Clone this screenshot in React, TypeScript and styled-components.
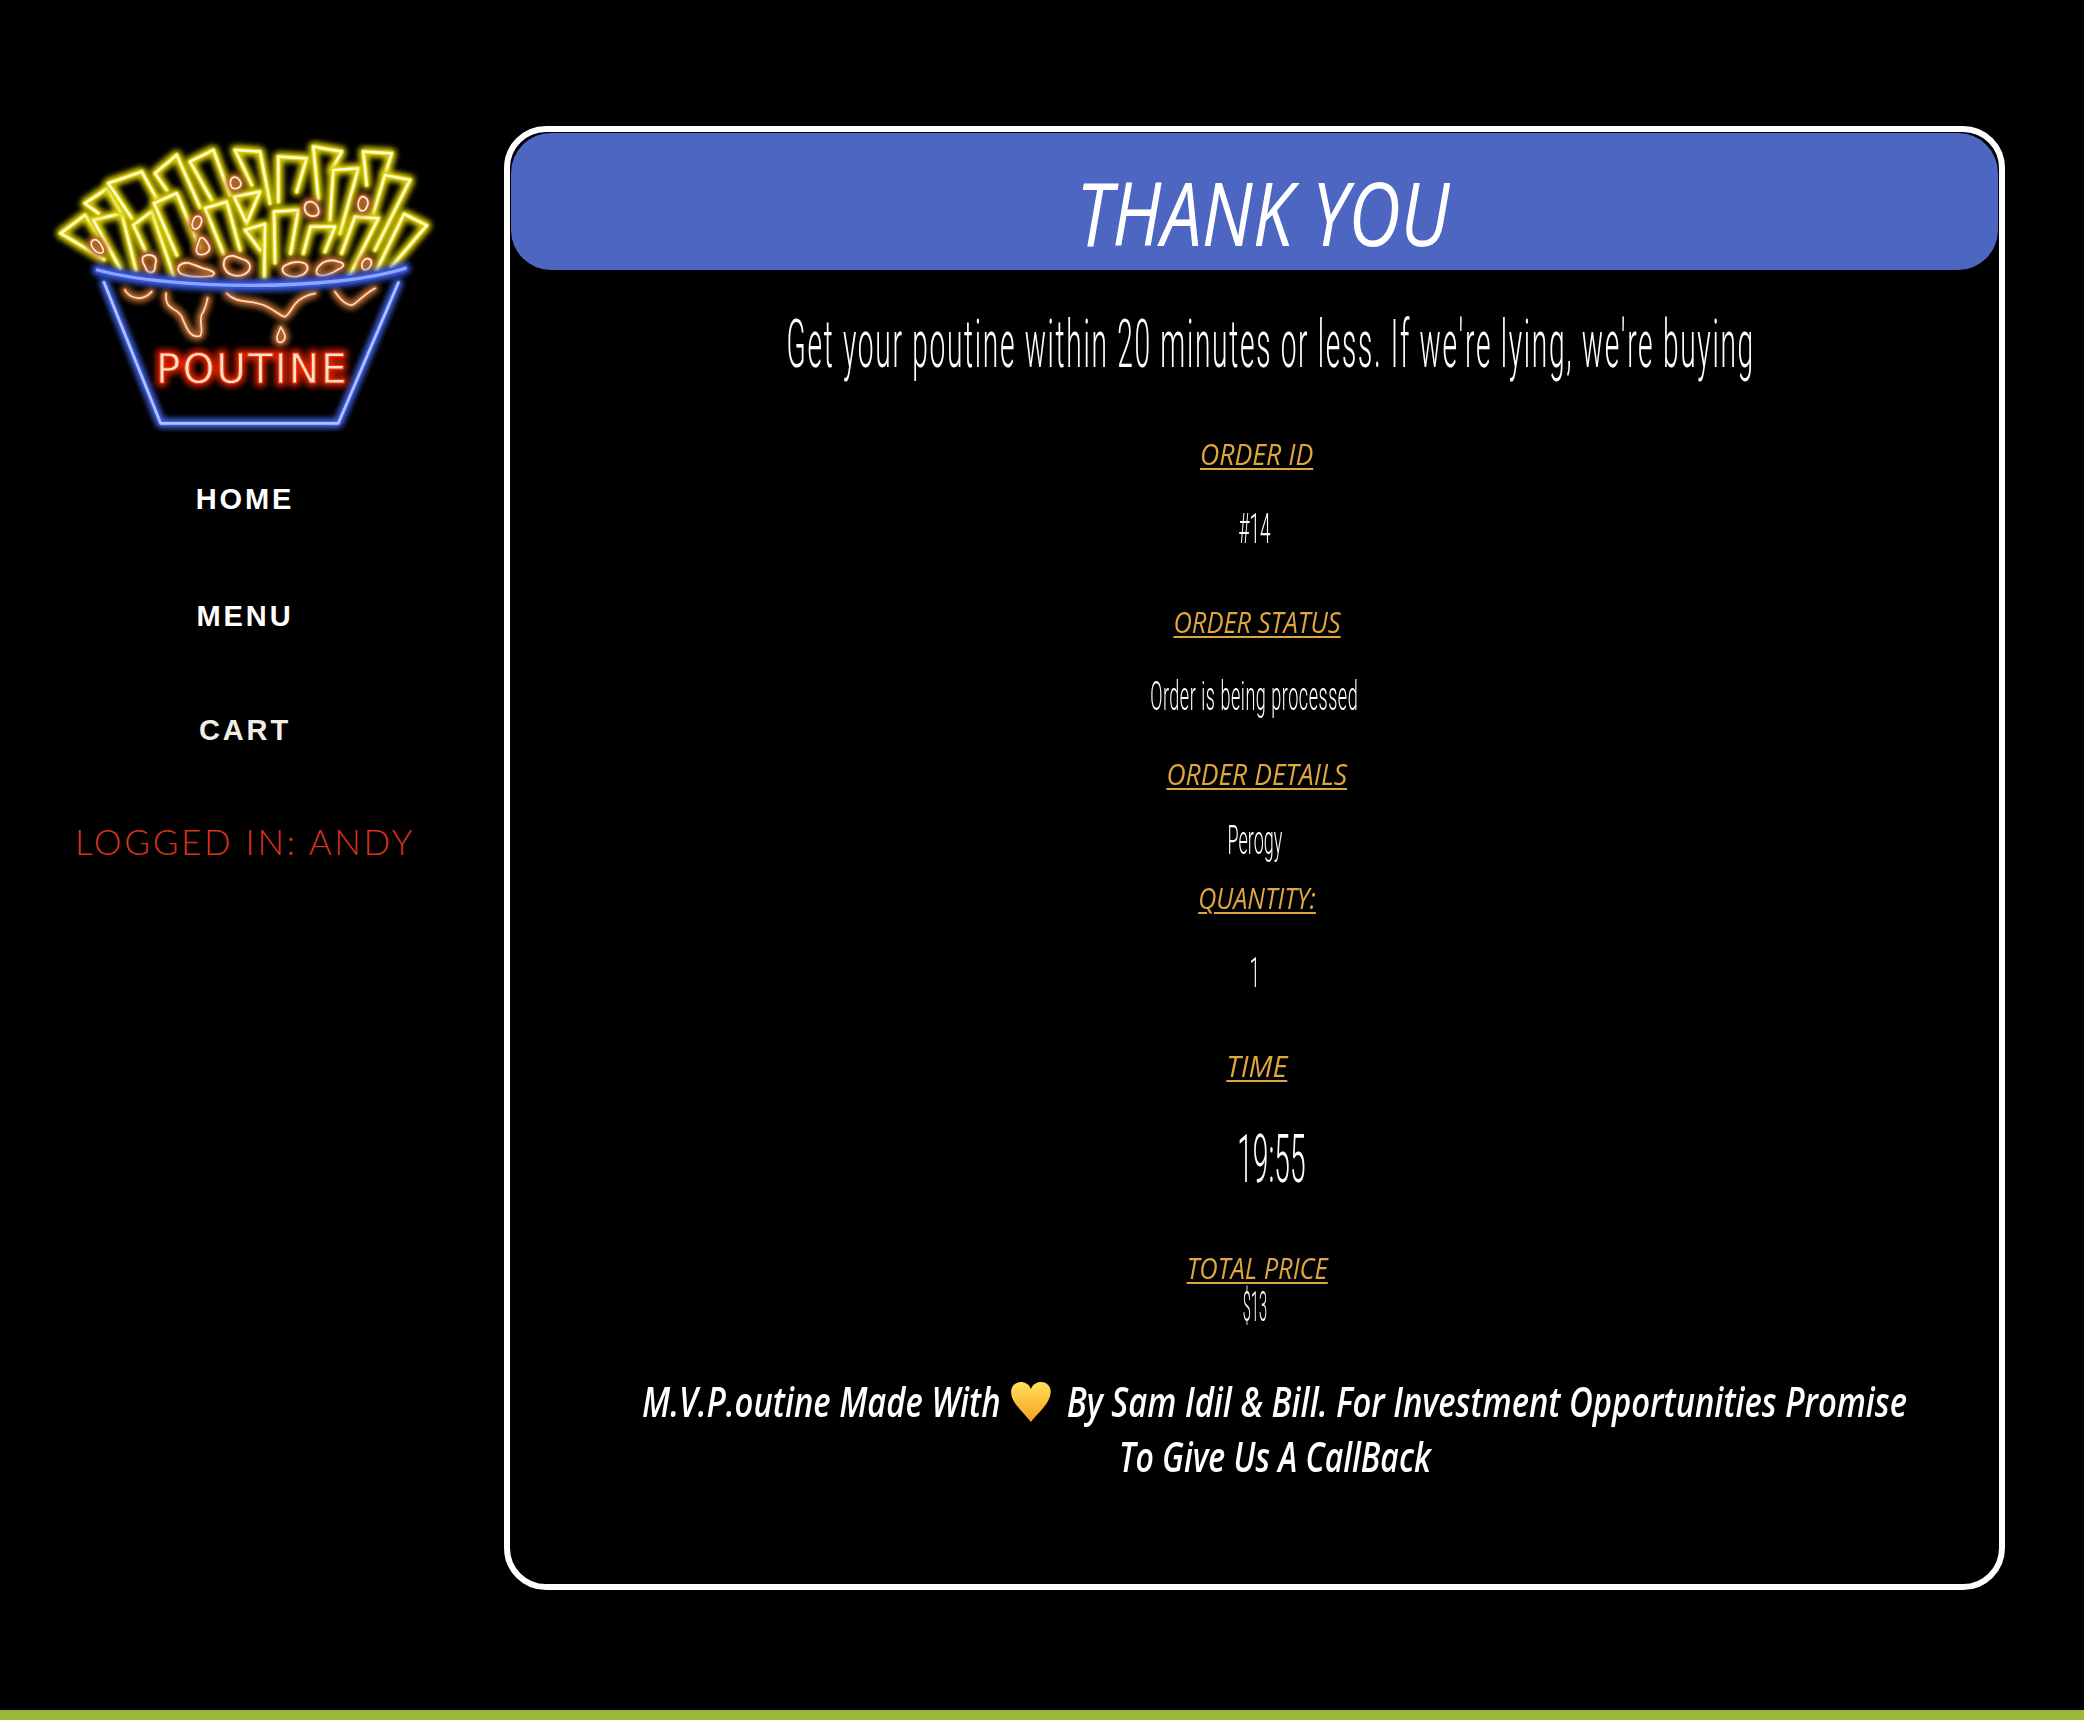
import React from "react";
import styled, { createGlobalStyle } from "styled-components";

const Global = createGlobalStyle`
  html, body { margin: 0; padding: 0; background: #000; overflow: hidden; }
  * { box-sizing: border-box; }
`;

const Page = styled.div`
  width: 2084px;
  height: 1720px;
  background: #000;
  display: flex;
  flex-direction: column;
`;
const Main = styled.div`
  flex: 1;
  display: flex;
  align-items: flex-start;
`;
const Sidebar = styled.aside`
  width: 490px;
  padding-top: 120px;
  display: flex;
  flex-direction: column;
  align-items: center;
`;
const LogoSvg = styled.svg`
  width: 420px;
  height: 330px;
  align-self: flex-start;
  margin-left: 30px;
  display: block;
`;
const NavLink = styled.a<{ $mt: number; $color?: string }>`
  display: block;
  margin-top: ${(p) => p.$mt}px;
  height: 40px;
  font: 700 29px/40px "Liberation Sans", Arial, sans-serif;
  letter-spacing: 2.9px;
  color: ${(p) => p.$color || "#fff"};
`;
const LoggedIn = styled.div`
  margin-top: 71px;
  height: 40px;
  font: 300 35px/40px "Lato", sans-serif;
  letter-spacing: 2.7px;
  color: #d8321a;
  white-space: nowrap;
`;
const Panel = styled.section`
  width: 1501px;
  height: 1464px;
  margin: 126px 0 0 14px;
  border: 6px solid #fff;
  border-radius: 42px;
  padding: 1px;
`;
const Header = styled.header`
  height: 137px;
  padding: 22px 0 0 16px;
  background: #4c66c2;
  border-radius: 40px;
  display: flex;
  justify-content: center;
  align-items: center;
`;
const Fit = styled.span<{ $sx: number }>`
  display: inline-block;
  flex: none;
  white-space: nowrap;
  transform: scaleX(${(p) => p.$sx});
`;
const Title = styled(Fit)`
  font: italic 400 87px/115px "Open Sans", sans-serif;
  color: #fff;
`;
const Row = styled.div<{ $mt: number; $h: number; $pl?: number }>`
  margin-top: ${(p) => p.$mt}px;
  height: ${(p) => p.$h}px;
  padding-left: ${(p) => p.$pl || 0}px;
  display: flex;
  justify-content: center;
  align-items: center;
`;
const Tagline = styled(Fit)`
  font: 300 67px/80px "Roboto", sans-serif;
  letter-spacing: 4px;
  color: #fff;
`;
const Label = styled(Fit)`
  font: italic 400 29px/30px "Open Sans", sans-serif;
  color: #dfa63f;
  text-decoration: underline;
  text-decoration-thickness: 2px;
  text-underline-offset: 3px;
`;
const Value = styled(Fit)<{ $size: number; $ls?: number }>`
  font: 300 ${(p) => p.$size}px/1 "Roboto", sans-serif;
  letter-spacing: ${(p) => p.$ls || 0}px;
  color: #fff;
`;
const Credit = styled(Fit)`
  font: italic 600 41px/55px "Open Sans", sans-serif;
  color: #fff;
`;
const Heart = styled.svg`
  display: inline-block;
  vertical-align: -6px;
  margin: 0 8px 0 12px;
`;
const GreenBar = styled.footer`
  height: 10px;
  background: #97b93a;
`;

type NeonProps = { d: string; glow: string; core: string; w?: number; cw?: number };
const Neon = ({ d, glow, core, w = 18, cw = 8 }: NeonProps) => (
  <g fill="none" strokeLinecap="round" strokeLinejoin="round">
    <path d={d} stroke={glow} strokeWidth={w + 4} filter="url(#wide)" />
    <path d={d} stroke={glow} strokeWidth={w} filter="url(#wide)" />
    <path d={d} stroke={glow} strokeWidth={w - 3} filter="url(#soft)" />
    <path d={d} stroke={core} strokeWidth={cw} filter="url(#soft)" />
  </g>
);

const fries = [
  "M222 418L92 340L165 285L205 345",
  "M270 445L190 300L275 280L318 450",
  "M205 280L165 250L232 205L272 275",
  "M305 295L235 190L335 155L385 245",
  "M410 210L375 160L440 105L510 262",
  "M545 240L480 125L550 90L600 225",
  "M665 195L615 90L690 95L720 250",
  "M745 245L745 110L830 115L800 215",
  "M865 235L850 80L935 95L905 150",
  "M900 300L910 150L985 145L930 340",
  "M1010 195L1000 95L1085 100L1065 165",
  "M1030 280L1065 165L1140 180L1035 390",
  "M1040 450L1122 282L1190 316L1085 440",
  "M935 400L975 290L1045 295L960 465",
  "M345 390L310 315L365 275L430 465",
  "M440 405L372 250L440 220L510 385",
  "M580 400L525 265L590 245L630 390",
  "M650 310L612 230L690 215L650 310",
  "M690 390L645 330L705 312L703 470",
  "M735 428L732 275L805 270L782 400",
  "M820 400L842 320L915 320L885 395",
];
const blobs = [
  "M185 365C195 350 212 365 220 390C222 402 205 402 195 392C188 385 180 375 185 365Z",
  "M340 410C355 400 380 405 378 425C372 440 380 455 362 458C345 455 348 440 340 430C336 420 336 415 340 410Z",
  "M450 435C470 420 490 435 520 445C550 452 560 460 545 468C510 472 470 472 450 460C442 450 442 442 450 435Z",
  "M590 412C610 400 625 415 645 420C665 430 665 450 645 462C620 475 590 465 582 440C580 428 582 418 590 412Z",
  "M760 440C780 425 815 420 830 435C838 450 825 465 800 470C775 472 750 460 760 440Z",
  "M862 445C875 425 900 415 925 425C945 430 945 438 925 448C905 462 870 475 860 460C858 452 860 448 862 445Z",
  "M998 425C1008 410 1026 415 1024 432C1018 450 1002 455 996 442C994 435 995 430 998 425Z",
  "M603 178C610 165 628 172 633 190C633 205 612 212 604 200C600 192 600 184 603 178Z",
  "M490 300C496 285 512 285 515 300C515 318 500 332 490 325C485 318 486 308 490 300Z",
  "M510 355C520 350 530 362 538 380C542 398 520 408 505 402C492 392 505 372 510 355Z",
  "M830 248C845 240 862 250 866 272C868 290 848 292 835 284C822 276 820 258 830 248Z",
  "M990 235C998 225 1012 232 1014 248C1012 268 1000 278 990 270C982 260 984 245 990 235Z",
];
const drips = [
  "M285 510C295 530 335 550 365 515",
  "M408 520C405 575 440 560 455 590C470 625 480 655 510 648C525 630 500 600 520 575C530 555 530 545 533 535",
  "M590 520C620 550 650 540 690 552C725 560 750 590 765 590C790 575 785 535 855 520",
  "M915 515C935 545 960 565 975 550C995 535 1015 515 1035 505",
  "M752 622C745 640 735 655 745 665C758 672 770 655 762 640C760 632 756 628 752 622Z",
];

export default function App() {
  return (
    <Page>
      <Global />
      <Main>
        <Sidebar>
          <LogoSvg viewBox="0 0 1260 990" role="img" aria-label="Poutine neon sign">
            <defs>
              <filter id="wide" x="0" y="0" width="1260" height="990" filterUnits="userSpaceOnUse">
                <feGaussianBlur stdDeviation="9" />
              </filter>
              <filter id="soft" x="0" y="0" width="1260" height="990" filterUnits="userSpaceOnUse">
                <feGaussianBlur stdDeviation="2" />
              </filter>
              <filter id="sign" x="0" y="0" width="1260" height="990" filterUnits="userSpaceOnUse">
                <feGaussianBlur stdDeviation="10" />
              </filter>
            </defs>
            {fries.map((d) => (
              <Neon key={d} d={d} glow="#d8cc10" core="#fffcc8" />
            ))}
            {blobs.map((d) => (
              <Neon key={d} d={d} glow="#b96a2c" core="#ffe9d6" w={14} cw={5} />
            ))}
            {drips.map((d) => (
              <Neon key={d} d={d} glow="#a9602a" core="#ffdcc0" w={16} cw={5} />
            ))}
            <Neon d="M222 487L392 910L925 910L1105 488" glow="#3d5fd8" core="#b4c0ff" w={17} cw={8} />
            <Neon d="M203 450C420 510 900 515 1125 445" glow="#3452d0" core="#8ea4ff" w={24} cw={10} />
            <text x="378" y="790" textLength="572" lengthAdjust="spacing" fontFamily="'DejaVu Sans', sans-serif" fontSize="122" fill="#e02400" stroke="#e02400" strokeWidth="20" filter="url(#sign)">POUTINE</text>
            <text x="378" y="790" textLength="572" lengthAdjust="spacing" fontFamily="'DejaVu Sans', sans-serif" fontSize="122" fill="#ffe2cc" stroke="#e83a10" strokeWidth="3" filter="url(#soft)">POUTINE</text>
          </LogoSvg>
          <NavLink $mt={29}>HOME</NavLink>
          <NavLink $mt={77}>MENU</NavLink>
          <NavLink $mt={74} $color="#f1ede6">CART</NavLink>
          <LoggedIn>LOGGED IN: ANDY</LoggedIn>
        </Sidebar>
        <Panel>
          <Header>
            <Title $sx={0.83}>THANK YOU</Title>
          </Header>
          <Row $mt={34} $h={80} $pl={33}>
            <Tagline $sx={0.42}>Get your poutine within 20 minutes or less. If we're lying, we're buying</Tagline>
          </Row>
          <Row $mt={55} $h={30} $pl={5}><Label $sx={0.92}>ORDER ID</Label></Row>
          <Row $mt={40} $h={40}><Value $size={42} $sx={0.45}>#14</Value></Row>
          <Row $mt={58} $h={30} $pl={5}><Label $sx={0.88}>ORDER STATUS</Label></Row>
          <Row $mt={40} $h={40}><Value $size={40} $sx={0.45} $ls={1.2}>Order is being processed</Value></Row>
          <Row $mt={42} $h={30} $pl={5}><Label $sx={0.915}>ORDER DETAILS</Label></Row>
          <Row $mt={32} $h={40}><Value $size={40} $sx={0.45}>Perogy</Value></Row>
          <Row $mt={22} $h={30} $pl={5}><Label $sx={0.865}>QUANTITY:</Label></Row>
          <Row $mt={40} $h={40}><Value $size={42} $sx={0.45}>1</Value></Row>
          <Row $mt={58} $h={30} $pl={5}><Label $sx={0.99}>TIME</Label></Row>
          <Row $mt={48} $h={60} $pl={33}><Value $size={67} $sx={0.42}>19:55</Value></Row>
          <Row $mt={64} $h={30} $pl={5}><Label $sx={0.88}>TOTAL PRICE</Label></Row>
          <Row $mt={6} $h={36}><Value $size={42} $sx={0.35}>$13</Value></Row>
          <Row $mt={49} $h={55} $pl={40}>
            <Credit $sx={0.8}>
              M.V.P.outine Made With
              <Heart width={52} height={42} viewBox="0 0 42 42" preserveAspectRatio="none">
                <defs>
                  <linearGradient id="heartFill" x1="0" y1="0" x2="0" y2="1">
                    <stop offset="0" stopColor="#ffe05a" />
                    <stop offset="1" stopColor="#f7a01f" />
                  </linearGradient>
                </defs>
                <path d="M21 41C14 32 1 22 1 11C1 4 6 1 11 1C15 1 19 3 21 8C23 3 27 1 31 1C36 1 41 4 41 11C41 22 28 32 21 41Z" fill="url(#heartFill)" />
              </Heart>
              {" "}By Sam Idil &amp; Bill. For Investment Opportunities Promise
            </Credit>
          </Row>
          <Row $mt={0} $h={55} $pl={40}><Credit $sx={0.78}>To Give Us A CallBack</Credit></Row>
        </Panel>
      </Main>
      <GreenBar />
    </Page>
  );
}
